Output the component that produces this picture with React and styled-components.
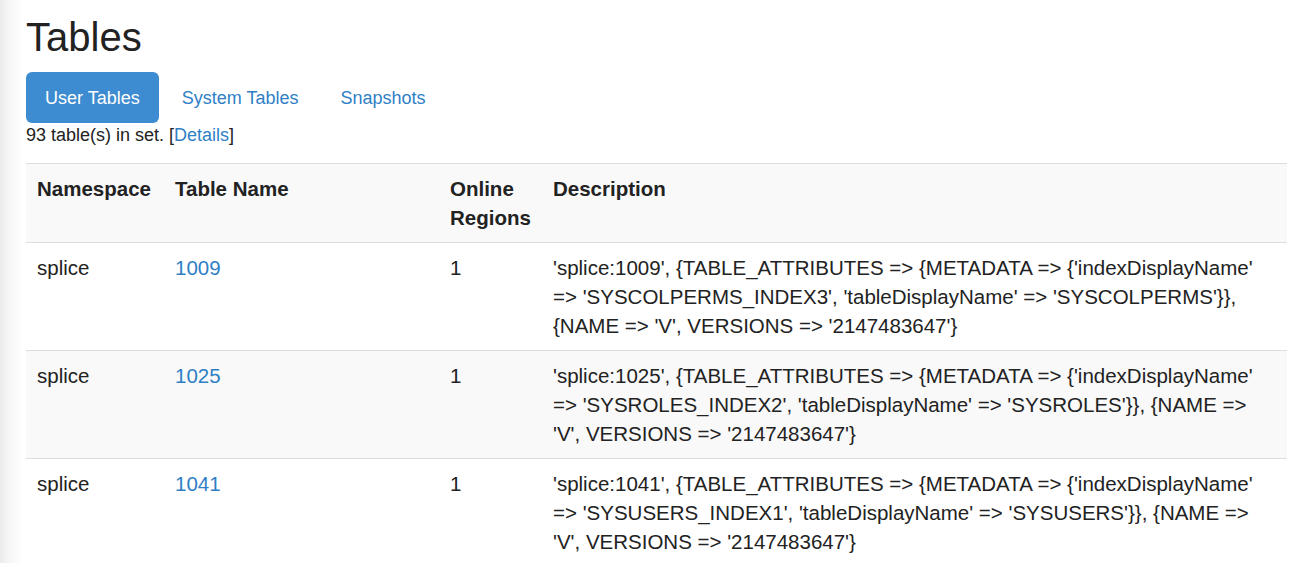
import React from "react";
import styled, { createGlobalStyle } from "styled-components";

const GlobalStyle = createGlobalStyle`
  html, body {
    margin: 0;
    padding: 0;
  }
  body {
    font-family: "Liberation Sans", Helvetica, Arial, sans-serif;
    color: #333;
    background: linear-gradient(to right, #ebebeb 0px, #f7f7f7 10px, #ffffff 22px);
    min-height: 563px;
  }
`;

const Page = styled.div`
  padding: 0 3px 0 26px;
`;

const Title = styled.h2`
  margin: 15px 0 13px;
  font-size: 40px;
  line-height: 44px;
  font-weight: 400;
  color: #222;
`;

const Pills = styled.ul`
  display: flex;
  list-style: none;
  margin: 0;
  padding: 0;
  gap: 3px;
`;

const Pill = styled.li`
  a {
    display: block;
    padding: 14px 19px 12px ${(p) => (p.$active ? "19px" : "20px")};
    font-size: 18px;
    line-height: 25px;
    border-radius: 6px;
    text-decoration: none;
    color: ${(p) => (p.$active ? "#fff" : "#2f7fc5")};
    background: ${(p) => (p.$active ? "#3d8bd0" : "transparent")};
  }
`;

const Info = styled.div`
  font-size: 18px;
  line-height: 25px;
  margin-bottom: 15px;
  color: #222;
  a {
    color: #2f7fc5;
    text-decoration: none;
  }
`;

const Table = styled.table`
  width: 100%;
  border-collapse: collapse;
  table-layout: fixed;
  font-size: 20.5px;
  line-height: 29px;
  color: #222;
`;

const Row = styled.tr`
  background: ${(p) => (p.$striped ? "#f9f9f9" : "#fff")};
`;

const HeadCell = styled.th`
  text-align: left;
  vertical-align: top;
  font-weight: 700;
  padding: 10px 11px;
  border-top: 1px solid #dddddd;
  border-bottom: 1px solid #dddddd;
`;

const Cell = styled.td`
  vertical-align: top;
  padding: 10px 11px;
  border-top: 1px solid #dddddd;
  a {
    color: #2f7fc5;
    text-decoration: none;
  }
`;

const rows = [
  {
    ns: "splice",
    name: "1009",
    regions: "1",
    desc: "'splice:1009', {TABLE_ATTRIBUTES => {METADATA => {'indexDisplayName' => 'SYSCOLPERMS_INDEX3', 'tableDisplayName' => 'SYSCOLPERMS'}}, {NAME => 'V', VERSIONS => '2147483647'}",
  },
  {
    ns: "splice",
    name: "1025",
    regions: "1",
    desc: "'splice:1025', {TABLE_ATTRIBUTES => {METADATA => {'indexDisplayName' => 'SYSROLES_INDEX2', 'tableDisplayName' => 'SYSROLES'}}, {NAME => 'V', VERSIONS => '2147483647'}",
  },
  {
    ns: "splice",
    name: "1041",
    regions: "1",
    desc: "'splice:1041', {TABLE_ATTRIBUTES => {METADATA => {'indexDisplayName' => 'SYSUSERS_INDEX1', 'tableDisplayName' => 'SYSUSERS'}}, {NAME => 'V', VERSIONS => '2147483647'}",
  },
];

export default function App() {
  return (
    <>
      <GlobalStyle />
      <Page>
        <Title>Tables</Title>
        <Pills>
          <Pill $active>
            <a href="#user">User Tables</a>
          </Pill>
          <Pill>
            <a href="#system">System Tables</a>
          </Pill>
          <Pill>
            <a href="#snapshots">Snapshots</a>
          </Pill>
        </Pills>
        <Info>
          93 table(s) in set. [<a href="#details">Details</a>]
        </Info>
        <Table>
          <colgroup>
            <col style={{ width: 138 }} />
            <col style={{ width: 275 }} />
            <col style={{ width: 103 }} />
            <col />
          </colgroup>
          <tbody>
            <Row $striped>
              <HeadCell>Namespace</HeadCell>
              <HeadCell>Table Name</HeadCell>
              <HeadCell>Online Regions</HeadCell>
              <HeadCell>Description</HeadCell>
            </Row>
            {rows.map((r, i) => (
              <Row key={r.name} $striped={i % 2 === 1}>
                <Cell>{r.ns}</Cell>
                <Cell>
                  <a href={`#t${r.name}`}>{r.name}</a>
                </Cell>
                <Cell>{r.regions}</Cell>
                <Cell>{r.desc}</Cell>
              </Row>
            ))}
          </tbody>
        </Table>
      </Page>
    </>
  );
}
